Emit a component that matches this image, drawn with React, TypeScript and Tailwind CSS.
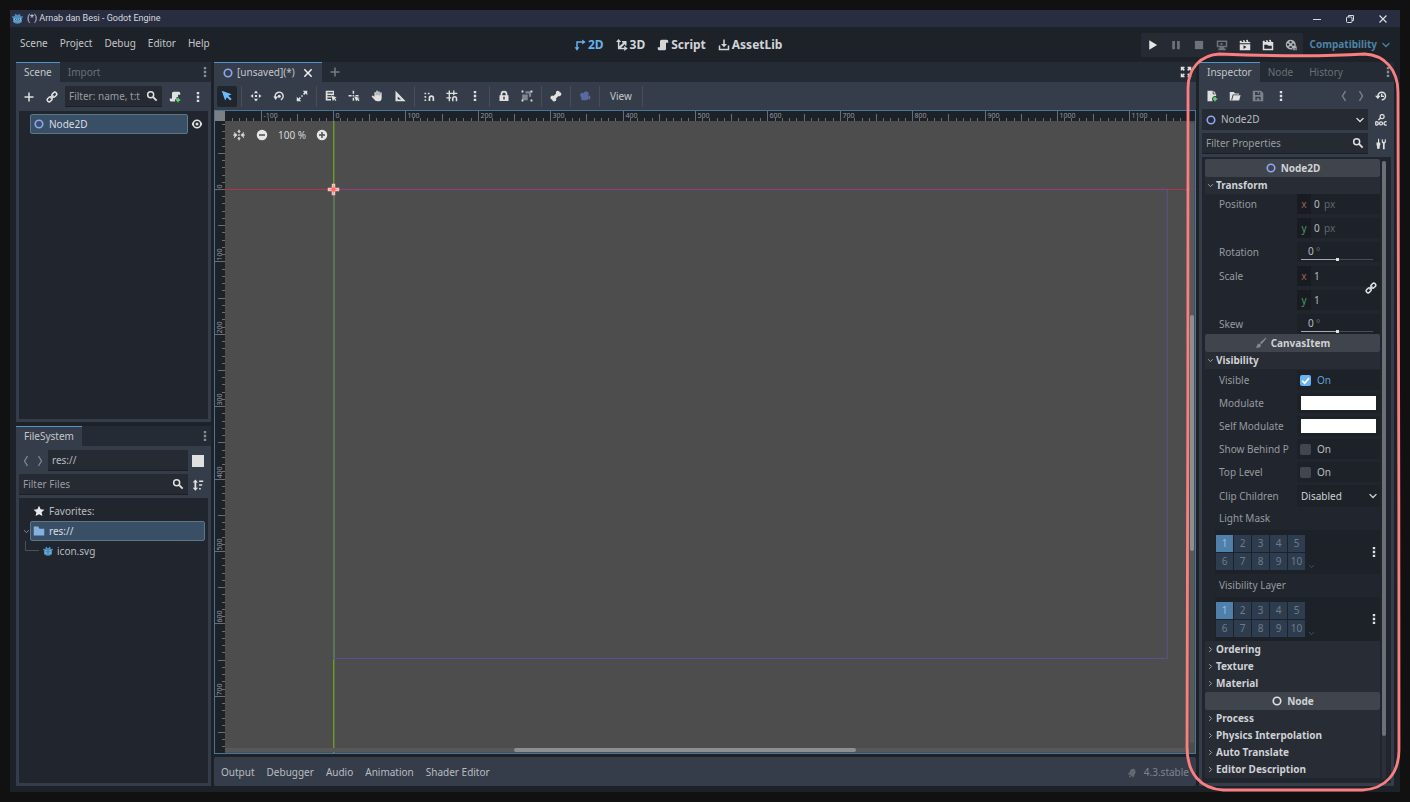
import React, { useState } from 'react';

const shapes: Record<string, React.ReactNode> = {
    add: <path d="M7 2v5H2v2h5v5h2V9h5V7H9V2z" />,
    close: <path d="M3.8 2.4 2.4 3.8 6.6 8l-4.2 4.2 1.4 1.4L8 9.4l4.2 4.2 1.4-1.4L9.4 8l4.2-4.2-1.4-1.4L8 6.6z" />,
    dots: <path d="M6.4 1.2h3.2v3.2H6.4zM6.4 6.4h3.2v3.2H6.4zM6.4 11.6h3.2v3.2H6.4z" />,
    link: (
        <g fill="none" stroke="currentColor" strokeWidth="2">
            <rect x="7.6" y="2.4" width="7" height="5" rx="2.5" transform="rotate(-45 11.1 4.9)" />
            <rect x="1.4" y="8.6" width="7" height="5" rx="2.5" transform="rotate(-45 4.9 11.1)" />
            <path d="M6 10l4-4" />
        </g>
    ),
    search: (
        <g fill="none" stroke="currentColor" strokeWidth="2">
            <circle cx="6.2" cy="6.2" r="4" />
            <path d="M9.2 9.2l5 5" strokeWidth="2.4" />
        </g>
    ),
    scriptAdd: (
        <>
            <path d="M6 1a2 2 0 0 0-2 2v7H1v2a2 2 0 0 0 2 2h5v-3h2V8h2V5h3V3a2 2 0 0 0-2-2z" />
            <path d="M11 9v2H9v2h2v2h2v-2h2v-2h-2V9z" fill="#5fdf6e" />
        </>
    ),
    script: <path d="M6 1a2 2 0 0 0-2 2v8H1v2a2 2 0 0 0 2 2h7a2 2 0 0 0 2-2V5h3V3a2 2 0 0 0-2-2z" />,
    node: <circle cx="8" cy="8" r="5" fill="none" stroke="currentColor" strokeWidth="2.2" />,
    eye: (
        <>
            <path d="M8 2C4.8 2 2.2 4.6 1 8c1.2 3.4 3.8 6 7 6s5.8-2.6 7-6c-1.2-3.4-3.8-6-7-6zm0 2a4 4 0 0 1 0 8 4 4 0 0 1 0-8z" fillRule="evenodd" />
            <circle cx="8" cy="8" r="2" />
        </>
    ),
    select: <path d="M1 1l4.5 13 2.4-4.3 4.3 4.3 2-2L9.8 7.8 14.2 5.6z" />,
    move: <path d="M8 .8 5.2 4.2h5.6zM8 15.2l-2.8-3.4h5.6zM.8 8l3.4-2.8v5.6zM15.2 8l-3.4-2.8v5.6zM6.6 6.6h2.8v2.8H6.6z" />,
    rotate: (
        <>
            <path d="M3.2 10A5.3 5.3 0 1 1 10.5 13" fill="none" stroke="currentColor" strokeWidth="2" />
            <path d="M.4 8.6h6.4L3.6 13.4z" />
            <circle cx="8.3" cy="8.2" r="2" />
        </>
    ),
    scale: <path d="M9 1h6v6l-2.2-2.2-1.9 1.900-1.600-1.600 1.900-1.900zM1 9v6h6l-2.200-2.200 1.900-1.900-1.600-1.600-1.900 1.900zM7 7h2v2H7z" />,
    list: <path d="M1 1h11v2H3.2v1.8H11v1.8H3.2v1.6H8V10H3.2v2H8v2H1zM8 7l2.6 8 1.5-2.6L14 14.6l1.2-1.2-2-2L15.6 10zM10.5 1H12v6h-1.5z" />,
    pivot: <path d="M6.2 1h2v4h-2zM.8 6.6h4v2h-4zM10 6.6h4v2h-4zM6.2 10.2h2v4h-2zM6.2 6.6h2v2h-2zM8.5 8.5l2.4 6.8 1.3-2.3 2 2 1.2-1.2-2-2 2.2-1.2z" />,
    hand: <path d="M7 1.5a1 1 0 0 1 2 0V7h.6V2.5a1 1 0 0 1 2 0V7h.6V4a1 1 0 0 1 2 0v6.5A4.5 4.5 0 0 1 9.7 15H8.5C6.5 15 5.4 14 4.5 12.8L1.3 9.2c-.8-1 .6-2.4 1.7-1.5L4.6 9V3.2a1 1 0 0 1 1.9 0V7H7z" />,
    ruler: <path d="M2 1v14h13.5zM5 8.5 9.5 12.5H5z" fillRule="evenodd" />,
    snap: <path d="M2 3.5h2.2v2.2H2zM2 8h2.2v2.2H2zM2 12.5h2.2v2H2zM6.5 3.5h2.2v2.2H6.5zM7.5 14.5v-3.7a3.7 3.7 0 0 1 7.4 0v3.7h-2.2v-3.7a1.5 1.5 0 0 0-3 0v3.7z" />,
    grid: <path d="M3.5.5h1.8v3h4.2v-3h1.8v3H15v1.8h-3.7V7H9.5V5.3H5.3v4.2H7v1.8H5.3V15H3.5v-3.7H.5V9.5h3V5.3h-3V3.5h3zM8 15v-3.5a3.5 3.5 0 0 1 7 0V15h-2v-3.5a1.5 1.5 0 0 0-3 0V15z" />,
    lock: <path d="M8 1a4.5 4.5 0 0 0-4.5 4.5V7H2v7.5h12V7h-1.5V5.5A4.5 4.5 0 0 0 8 1zm0 2.2a2.3 2.3 0 0 1 2.3 2.3V7H5.7V5.5A2.3 2.3 0 0 1 8 3.2zM7 9h2v3.5H7z" fillRule="evenodd" />,
    group: (
        <>
            <path d="M.8.8h2.4v2.4H.8zM12.8.8h2.4v2.4h-2.4zM.8 12.8h2.4v2.4H.8zM12.8 12.8h2.4v2.4h-2.4z" />
            <path d="M6 1.5h7.5V9h-3V4.5H6zM1.5 6H9v7.5H1.5z" opacity=".45" />
        </>
    ),
    bone: <path d="M10.5 1a2.6 2.6 0 0 0-2.4 3.6L4.6 8.1A2.6 2.6 0 1 0 3 12.9a2.6 2.6 0 1 0 4.9-1.5l3.5-3.5A2.6 2.6 0 1 0 13.1 3 2.6 2.6 0 0 0 10.5 1z" />,
    camera: <path d="M9 2a3.2 3.2 0 0 0-3.1 2.2A3 3 0 1 0 3 9.5V12a1.5 1.5 0 0 0 1.5 1.5h6A1.5 1.5 0 0 0 12 12v-.8l3 1.8V7l-2.6 1.5V7A3.2 3.2 0 0 0 9 2z" />,
    expand: <path d="M1 1h5v2H4.5l2 2L5 6.500l-2-2V6H1zM10 1h5v5h-2V4.500l-2 2L9.500 5l2-2H10zM1 10h2v1.500l2-2L6.500 11l-2 2H6v2H1zM11 9.500l2 2V10h2v5h-5v-2h1.500l-2-2z" />,
    center: (
        <>
            <path d="M7 1h2v2h1.500L8 5.800 5.500 3H7zM7 15h2v-2h1.500L8 10.200 5.500 13H7zM7 7h2v2H7z" />
            <path d="M1 3.500l1 3.500H.5v2H2l-1 3.500L6 8zM15 3.500 14 7h1.500v2H14l1 3.500L10 8z" />
        </>
    ),
    minus: <path d="M8 1a7 7 0 1 0 0 14A7 7 0 0 0 8 1zM4 7h8v2H4z" fillRule="evenodd" />,
    plus: <path d="M8 1a7 7 0 1 0 0 14A7 7 0 0 0 8 1zM7 4h2v3h3v2H9v3H7V9H4V7h3z" fillRule="evenodd" />,
    axes2d: <path d="M3 3h8V.8L15.5 4 11 7.2V5H5v6h2.2L4 15.5.8 11H3z" />,
    axes3d: <path d="M3.5 0 7 4H4.5v5.5L10 4.5H8V2.5h6v6h-2V6.5L6.5 11.5H11V9l4.500 3.500L11 16v-2.500H2.500V4H0z" />,
    assetLib: <path d="M7 .8h2v6h3L8 11 4 6.8h3zM1 8.5h2V13h10V8.5h2V15H1z" />,
    play: <path d="M3 1.8v12.4L13.5 8z" />,
    pause: <path d="M3 2.5h3.6v11H3zM9.4 2.5H13v11H9.4z" />,
    stop: <path d="M2.5 2.5h11v11h-11z" />,
    remote: <path d="M1 2h14v9h-4v1.5h2V15H3v-2.5h2V11H1zM3 4v5h10V4zM6 4.5v4L10 6.5z" fillRule="evenodd" />,
    clapPlay: <path d="M1 2.5 3 2l1 2h2L5 1.8l2.3-.3 1 2.5h2l-1-2.7 2.3-.3 1 3H15V15H1zM1 5.5V7h14V5.5zM6 8.3v5l4-2.5z" fillRule="evenodd" />,
    clap: <path d="M1 2.5 3 2l1 2h2L5 1.8l2.3-.3 1 2.5h2l-1-2.7 2.3-.3 1 3H15V15H1zM3 7.5V13h10V9H8.5L7 7.5z" fillRule="evenodd" />,
    movie: <path d="M7.5 1a6.5 6.5 0 1 0 0 13H10v-2h1v3h2v-3h1v3h1.5V9.5H14A6.5 6.5 0 0 0 7.5 1zm0 1.5a1.6 1.6 0 1 1 0 3.2 1.6 1.6 0 0 1 0-3.2zM4 6a1.5 1.5 0 1 1 0 3 1.5 1.5 0 0 1 0-3zm7 0a1.5 1.5 0 1 1 0 3 1.5 1.5 0 0 1 0-3zM6 9.5h3V12H6z" fillRule="evenodd" />,
    resNew: (
        <>
            <path d="M2 1h7v4.5h4.5V8H10v2H8v4h1v1H2zM10 1l3.5 3.5H10z" />
            <path d="M11 9v2H9v2h2v2h2v-2h2v-2h-2V9z" fill="#5fdf6e" />
        </>
    ),
    folderOpen: <path d="M1 2.5h5.5L8 4.5h5.5V6H5L3 13l1.5 1H1zM6 7h9.5L13.5 14H4z" />,
    save: <path d="M1 1h11l3 3v11H1zM4 2.5v4h7v-4H9.3V5H7.5V2.5zM4.5 9v4.5h7V9zM6.5 11h3v2.5h-3z" fillRule="evenodd" />,
    prev: <path d="M10 1.5 6 8l4 6.5" fill="none" stroke="currentColor" strokeWidth="1.8" />,
    next: <path d="M6 1.5 10 8l-4 6.5" fill="none" stroke="currentColor" strokeWidth="1.8" />,
    history: (
        <>
            <path d="M4 10V8a5 5 0 1 1 5 5" fill="none" stroke="currentColor" strokeWidth="2" />
            <path d="M0 7.5h7.5L3.8 12zM8 5h1.8v2.5H12v1.8H8z" />
        </>
    ),
    doc: (
        <g fill="none" stroke="currentColor">
            <circle cx="9.5" cy="3.5" r="2.7" strokeWidth="1.7" />
            <path d="M7.5 5.5 4.5 8" strokeWidth="2" />
            <path d="M1 10v5M1 10.3h1.2a2 2 0 0 1 0 4.4H1M15.5 10.7a2.2 2.2 0 1 0 0 3.6" strokeWidth="1.7" />
            <circle cx="8" cy="12.5" r="2" strokeWidth="1.7" />
        </g>
    ),
    tools: <path d="M4 1h1.5v5H7v4H6.3v3a1.8 1.8 0 0 1-3.6 0v-3H2V6h2zM9 1.5v3.3a3 3 0 0 0 1.6 2.6V15h2.3V7.4A3 3 0 0 0 14.500 4.8V1.5L13 2v3h-2.500V2z" />,
    down: <path d="M2.5 5l5.5 5.5L13.5 5" fill="none" stroke="currentColor" strokeWidth="2.2" />,
    right: <path d="M5 2.5l5.5 5.5L5 13.5" fill="none" stroke="currentColor" strokeWidth="2.2" />,
    brush: <path d="M14.5.8 6.5 7.5l2.2 2.2L15.3 1.7zM5.5 8.6c-1.5 0-2.3 1-2.5 2.4-.1 1-.8 2-2 2.5 3 1.5 7 .5 7-2.8z" />,
    star: <path d="M8 1l2.2 4.6 5 .6-3.7 3.4 1 5L8 12.2 3.5 14.6l1-5L.8 6.2l5-.6z" />,
    folder: <path d="M1 2h6l1.5 3H15v9H1z" />,
    sort: <path d="M4.5.5 8 4.5H5.7v7H8l-3.5 4-3.5-4h2.3v-7H1zM9.5 2H15v2H9.5zM9.5 7h4v2h-4zM9.5 12h2.2v2H9.5z" />,
    bell: <path d="M11 1.5C7 .5 5.5 3 4.5 5.5S2.5 8.5 1 9l10 6c.3-1.8 0-3 1.5-5S15 3.5 11 1.5zM3.5 12a2 2 0 0 0 3.5 2z" />,
};

const Icon: React.FC<{ name: string; size?: string; className?: string }> = ({ name, size = 'size-3', className = '' }) => (
    <svg viewBox="0 0 16 16" fill="currentColor" aria-hidden="true" className={`shrink-0 ${size} ${className}`}>
        {shapes[name]}
    </svg>
);

const GodotHead: React.FC<{ className?: string }> = ({ className = '' }) => (
    <svg viewBox="0 0 16 16" aria-hidden="true" className={`shrink-0 ${className}`}>
        <path d="M6 1 7 3h2l1-2 2 1v2l1.5 1L15 4l1 2-1.5 1.5V12c0 2-3 3.5-6.500 3.500S1.500 14 1.500 12V7.500L0 6l1-2 1.500 1L4 4V2z" fill="#478cbf" />
        <circle cx="4.8" cy="9" r="1.7" fill="#b9d3e6" />
        <circle cx="11.2" cy="9" r="1.7" fill="#b9d3e6" />
        <circle cx="5" cy="9" r="1" fill="#414042" />
        <circle cx="11" cy="9" r="1" fill="#414042" />
        <path d="M2.5 12h3v1h5v-1h3" fill="none" stroke="#8fbbdb" strokeWidth=".7" />
    </svg>
);

const IconButton: React.FC<{ icon: string; label: string; className?: string }> = ({ icon, label, className = 'w-5' }) => (
    <button type="button" aria-label={label} className={`flex h-[21px] shrink-0 items-center justify-center ${className}`}>
        <Icon name={icon} />
    </button>
);

const Separator = () => <span className="mx-px h-[21px] w-px shrink-0 bg-[#474e5a]" />;

const DockTabs: React.FC<{ tabs: string[] }> = ({ tabs }) => {
    const [active, setActive] = useState(tabs[0]);
    return (
        <div role="tablist" className="flex h-5 shrink-0 items-center bg-[#252b34]">
            {tabs.map((tab) => (
                <button
                    key={tab}
                    type="button"
                    role="tab"
                    aria-selected={tab === active}
                    onClick={() => setActive(tab)}
                    className={`h-full border-t px-2 ${tab === active ? 'border-[#5294cc] bg-[#363d4a] text-[#c3c6ca]' : 'border-transparent text-[#6b7077]'}`}
                >
                    {tab}
                </button>
            ))}
            <IconButton icon="dots" label="Dock options" className="ml-auto w-3 text-[#8a8e94]" />
        </div>
    );
};

const SearchBox: React.FC<{ placeholder: string }> = ({ placeholder }) => (
    <label className="flex h-[21px] min-w-0 flex-1 items-center gap-1 border-b border-[#1b2027] bg-[#252a33] pr-1 pl-1">
        <input type="text" aria-label={placeholder} placeholder={placeholder} className="w-full min-w-0 flex-1 bg-transparent outline-none placeholder:text-[#999ca1]" />
        <Icon name="search" className="text-[#e0e0e0]" />
    </label>
);

const SceneDock = () => (
    <section className="flex min-h-0 flex-1 flex-col">
        <DockTabs tabs={['Scene', 'Import']} />
        <div className="flex min-h-0 flex-1 flex-col gap-1 bg-[#363d4a] px-[3px] pt-1 pb-[3px]">
            <div className="flex items-center gap-[3px] text-[#e0e0e0]">
                <IconButton icon="add" label="Add node" />
                <IconButton icon="link" label="Instantiate scene" />
                <SearchBox placeholder="Filter: name, t:t" />
                <IconButton icon="scriptAdd" label="Attach script" />
                <IconButton icon="dots" label="More" />
            </div>
            <div className="flex-1 bg-[#21262e] pt-[3px] pr-[5px] pl-[11px]">
                <div className="flex h-5 items-center gap-[3px]">
                    <button type="button" className="flex h-5 flex-1 items-center gap-1 rounded-xs border border-[#5d7688] bg-[#384f66] px-0.5 text-[#dadde0]">
                        <Icon name="node" className="text-[#8da5f3]" />
                        Node2D
                    </button>
                    <IconButton icon="eye" label="Toggle visibility" className="w-3 text-[#e0e0e0]" />
                </div>
            </div>
        </div>
    </section>
);

const FileSystemDock = () => (
    <section className="flex min-h-0 flex-1 flex-col">
        <DockTabs tabs={['FileSystem']} />
        <div className="flex min-h-0 flex-1 flex-col gap-[3px] bg-[#363d4a] px-[3px] pt-1 pb-[3px]">
            <div className="flex items-center">
                <IconButton icon="prev" label="Back" className="w-3.5 text-[#7e838b]" />
                <IconButton icon="next" label="Forward" className="w-3.5 text-[#7e838b]" />
                <input aria-label="Path" defaultValue="res://" className="ml-px h-[21px] min-w-0 flex-1 border-b border-[#1b2027] bg-[#252a33] px-1 outline-none" />
                <button type="button" aria-label="Split mode" className="mr-1 ml-1 size-3 bg-[#e0e0e0]" />
            </div>
            <div className="flex items-center">
                <SearchBox placeholder="Filter Files" />
                <IconButton icon="sort" label="Sort files" className="w-5 text-[#e0e0e0]" />
            </div>
            <ul role="tree" className="flex-1 bg-[#21262e] pt-[3px] pr-[3px]">
                <li role="treeitem" className="flex h-5 items-center gap-1 pl-3.5">
                    <Icon name="star" className="text-[#e8e8e8]" />
                    Favorites:
                </li>
                <li role="treeitem" className="flex h-5 items-center pl-1">
                    <Icon name="down" size="size-[7px]" className="text-[#8a8e94]" />
                    <button type="button" className="flex h-5 flex-1 items-center gap-1 rounded-xs border border-[#5d7688] bg-[#384f66] px-0.5 text-[#dadde0]">
                        <Icon name="folder" className="text-[#84b1e0]" />
                        res://
                    </button>
                </li>
                <li role="treeitem" className="flex h-5 items-center pl-1.5">
                    <span className="h-2.5 w-3.5 self-start border-b border-l border-[#4b5058]" />
                    <GodotHead className="mr-1 ml-1 size-2.5" />
                    icon.svg
                </li>
            </ul>
        </div>
    </section>
);

// Canvas geometry: origin inside the canvas and on-screen length of 10 units
const ORIGIN_X = 108.5;
const ORIGIN_Y = 68.5;
const STEP = 7.24;

const ticks = (from: number, to: number) => Array.from({ length: to - from }, (_, i) => from + i);
const tickSize = (n: number) => (n % 10 === 0 ? 10 : n % 5 === 0 ? 7 : 3);

const TopRuler = () => (
    <svg className="h-2.5 w-full bg-[#1d2229]" aria-hidden="true">
        {ticks(-14, 119).map((n) => {
            const x = Math.round(ORIGIN_X + n * STEP - 0.5) + 0.5;
            return (
                <g key={n}>
                    <path d={`M${x} 10v-${tickSize(n)}`} stroke="#6a6e74" />
                    {n % 10 === 0 && <text x={x + 2} y="7" fontSize="7" fill="#94979b">{n * 10}</text>}
                </g>
            );
        })}
    </svg>
);

const SideRuler = () => (
    <svg className="h-full w-2.5 bg-[#1d2229]" aria-hidden="true">
        {ticks(-9, 78).map((n) => {
            const y = Math.round(ORIGIN_Y + n * STEP - 0.5) + 0.5;
            return (
                <g key={n}>
                    <path d={`M10 ${y}h-${tickSize(n)}`} stroke="#6a6e74" />
                    {n % 10 === 0 && <text transform={`translate(7 ${y - 1}) rotate(-90)`} fontSize="7" fill="#94979b">{n * 10}</text>}
                </g>
            );
        })}
    </svg>
);

const Canvas = () => (
    <div className="relative min-h-0 overflow-hidden bg-[#4d4d4d]">
        <svg className="absolute inset-0 size-full" aria-hidden="true">
            <rect x="0" y="67" width="100%" height="1" fill="#5a494b" />
            <rect x="0" y="68" width="100%" height="1" fill="#a5394a" />
            <rect x="108" y="0" width="1" height="100%" fill="#6c9a2c" />
            <rect x="109" y="0" width="1" height="100%" fill="#587038" />
            <rect x="108" y="69" width="2" height="468" fill="#5c7558" />
            <rect x="108" y="537" width="835" height="1" fill="#565292" />
            <rect x="941" y="68" width="1" height="470" fill="#504e5a" />
            <rect x="942" y="68" width="1" height="470" fill="#565288" />
            <rect x="108" y="67" width="835" height="1" fill="#574a55" />
            <rect x="108" y="68" width="835" height="1" fill="#8a4079" />
            <path d="M107.5 63.5h2v4h4v2h-4v4h-2v-4h-4v-2h4z" fill="#ff7466" stroke="#f0c4bd" strokeWidth="1.5" />
            <circle cx="108.5" cy="68.5" r="2.2" fill="#ff6a5c" />
        </svg>
        <div className="relative flex h-7 items-center pl-1 text-[#d8d8d8]">
            <IconButton icon="center" label="Center view" />
            <IconButton icon="minus" label="Zoom out" className="ml-[3px] w-5 text-[#e6e6e6]" />
            <button type="button" className="w-10">100 %</button>
            <IconButton icon="plus" label="Zoom in" className="w-5 text-[#e6e6e6]" />
        </div>
        <div className="absolute right-1.5 bottom-px left-0 h-1 bg-[#585858]">
            <div className="ml-[30%] h-full w-[35.5%] rounded-full bg-[#8e8e8e]" />
        </div>
        <div className="absolute top-0.5 right-px bottom-2.5 w-1 bg-[#585858]">
            <div className="absolute top-[31%] h-[38%] w-full rounded-full bg-[#8e8e8e]" />
        </div>
    </div>
);

const Toolbar = () => (
    <div className="flex h-7 shrink-0 items-center gap-[3px] bg-[#363d4a] pl-[3px] text-[#e0e0e0]">
        <IconButton icon="select" label="Select mode" className="w-5 rounded-xs bg-[#20262e] text-[#70bafa]" />
        <Separator />
        <IconButton icon="move" label="Move mode" />
        <IconButton icon="rotate" label="Rotate mode" />
        <IconButton icon="scale" label="Scale mode" />
        <Separator />
        <IconButton icon="list" label="List selectable nodes" />
        <IconButton icon="pivot" label="Change pivot" />
        <IconButton icon="hand" label="Pan mode" />
        <IconButton icon="ruler" label="Ruler mode" />
        <Separator />
        <IconButton icon="snap" label="Smart snap" />
        <IconButton icon="grid" label="Grid snap" />
        <IconButton icon="dots" label="Snapping options" />
        <Separator />
        <IconButton icon="lock" label="Lock" />
        <IconButton icon="group" label="Group" />
        <Separator />
        <IconButton icon="bone" label="Skeleton options" />
        <Separator />
        <IconButton icon="camera" label="Override camera" className="w-5 text-[#596a9c]" />
        <Separator />
        <button type="button" className="px-1.5 text-[#c3c6ca]">View</button>
        <Separator />
    </div>
);

const Workspace = () => (
    <main className="flex min-w-0 flex-1 flex-col">
        <div className="flex h-5 shrink-0 items-center bg-[#252b34]">
            <div className="flex h-5 items-center gap-[3px] border-t border-[#5294cc] bg-[#363d4a] pr-2 pl-2 text-[#c3c6ca]">
                <Icon name="node" className="text-[#8da5f3]" />
                [unsaved](*)
                <button type="button" aria-label="Close scene" className="ml-1 text-[#f0f0f0]"><Icon name="close" /></button>
            </div>
            <IconButton icon="add" label="New scene" className="ml-[3px] w-5 text-[#777b81]" />
            <IconButton icon="expand" label="Distraction free mode" className="ml-auto w-5 text-[#e0e0e0]" />
        </div>
        <Toolbar />
        <div className="grid min-h-0 flex-1 grid-cols-[10px_1fr] grid-rows-[10px_1fr] border border-[#487598]">
            <div className="bg-[#7c8086]" />
            <TopRuler />
            <SideRuler />
            <Canvas />
        </div>
        <nav aria-label="Bottom panel" className="mt-[3px] flex h-[29px] shrink-0 items-center gap-3 rounded-xs bg-[#363d4a] px-[7px] pt-0.5">
            {['Output', 'Debugger', 'Audio', 'Animation', 'Shader Editor'].map((name) => (
                <button key={name} type="button">{name}</button>
            ))}
            <span className="ml-auto flex items-center gap-[7px] text-[#7f848c]">
                <Icon name="bell" size="size-2.5" className="text-[#626770]" />
                4.3.stable
            </span>
        </nav>
    </main>
);

const ClassHeader: React.FC<{ icon: string; iconClass: string; title: string }> = ({ icon, iconClass, title }) => (
    <h2 className="flex h-[18px] items-center justify-center gap-1 rounded-xs bg-[#40444c] font-bold text-[#cfd1d4]">
        <Icon name={icon} className={iconClass} />
        {title}
    </h2>
);

const Section: React.FC<{ title: string; open?: boolean }> = ({ title, open = false }) => (
    <button type="button" aria-expanded={open} className="flex h-[17px] w-full items-center gap-0.5 bg-[#282c35] pl-0.5 font-bold text-[#cfd1d4]">
        <Icon name={open ? 'down' : 'right'} size="size-[7px]" className="text-[#a0a3a8]" />
        {title}
    </button>
);

const Row: React.FC<{ label: string; htmlFor?: string; children: React.ReactNode; className?: string }> = ({ label, htmlFor, children, className = 'h-5' }) => (
    <div className={`flex ${className}`}>
        <label htmlFor={htmlFor} className="flex w-[92px] shrink-0 items-center pl-3.5 whitespace-nowrap text-[#979a9f]">{label}</label>
        <div className="flex min-w-0 flex-1 items-center bg-[#1d2229]">{children}</div>
    </div>
);

const AxisField: React.FC<{ id: string; axis: 'x' | 'y'; value: string; unit?: string }> = ({ id, axis, value, unit }) => (
    <>
        <span className={`flex h-full w-3.5 items-center justify-center bg-[#181b21] ${axis === 'x' ? 'text-[#a0614f]' : 'text-[#4f9a61]'}`}>{axis}</span>
        <input id={id} defaultValue={value} className="ml-[3px] w-2.5 bg-transparent outline-none" />
        {unit && <span className="text-[#62666d]">{unit}</span>}
    </>
);

const AngleField: React.FC<{ id: string; label: string }> = ({ id, label }) => (
    <div className="flex h-full flex-1 flex-col pr-[7px] pl-1">
        <div className="flex flex-1 items-center pt-0.5 pl-[7px]">
            <input id={id} defaultValue="0" className="w-2 bg-transparent outline-none" />
            <span className="text-[#62666d]">°</span>
        </div>
        <input
            type="range"
            aria-label={label}
            className="mb-0.5 h-px w-full appearance-none bg-linear-to-r from-[#a8aaad] from-50% to-[#484c53] to-50% [&::-webkit-slider-thumb]:size-[3px] [&::-webkit-slider-thumb]:appearance-none [&::-webkit-slider-thumb]:bg-[#e0e0e0]"
        />
    </div>
);

const CheckField: React.FC<{ id: string; checked?: boolean }> = ({ id, checked = false }) => {
    const [on, setOn] = useState(checked);
    return (
        <label className={`flex items-center gap-1.5 pl-[3px] ${on ? 'text-[#5f9fd6]' : ''}`}>
            <span className="relative size-[11px]">
                <input id={id} type="checkbox" checked={on} onChange={() => setOn(!on)} className="block size-[11px] appearance-none rounded-xs bg-[#42464e] checked:bg-[#69b3f5]" />
                {on && (
                    <svg viewBox="0 0 10 10" className="pointer-events-none absolute inset-0 size-[11px]" aria-hidden="true">
                        <path d="M2 5.2l2.2 2.3L8.2 2.8" fill="none" stroke="#fff" strokeWidth="1.6" />
                    </svg>
                )}
            </span>
            On
        </label>
    );
};

const ColorField: React.FC<{ label: string }> = ({ label }) => (
    <button type="button" aria-label={label} className="mx-1 h-3.5 flex-1 bg-white" />
);

const LayerField: React.FC<{ label: string }> = ({ label }) => (
    <div className="pl-2.5">
        <div className="h-4 pl-1 leading-4 text-[#979a9f]">{label}</div>
        <div className="mt-1 flex h-11 items-center bg-[#1d2229] pl-px">
            <div className="grid grid-cols-5 gap-px">
                {Array.from({ length: 10 }, (_, i) => (
                    <button key={i} type="button" className={`h-[17px] w-[17px] leading-4 ${i === 0 ? 'bg-[#4f7fab] text-[#a3bdd4]' : 'bg-[#2d3d4f] text-[#6f7b87]'}`}>
                        {i + 1}
                    </button>
                ))}
            </div>
            <Icon name="down" size="size-[7px]" className="mb-1 ml-[3px] self-end text-[#3c5670]" />
            <IconButton icon="dots" label={`${label} options`} className="ml-auto w-3 text-[#e0e0e0]" />
        </div>
    </div>
);

const Inspector = () => (
    <aside className="flex w-[195px] shrink-0 flex-col">
        <DockTabs tabs={['Inspector', 'Node', 'History']} />
        <div className="flex min-h-0 flex-1 flex-col gap-[3px] bg-[#363d4a] p-[3px] text-[#e0e0e0]">
            <div className="flex items-center gap-[3px]">
                <IconButton icon="resNew" label="New resource" />
                <IconButton icon="folderOpen" label="Load resource" />
                <IconButton icon="save" label="Save resource" className="w-5 text-[#7e838b]" />
                <IconButton icon="dots" label="Resource options" />
                <IconButton icon="prev" label="Previous object" className="ml-auto w-3.5 text-[#7e838b]" />
                <IconButton icon="next" label="Next object" className="w-3.5 text-[#7e838b]" />
                <IconButton icon="history" label="Edited objects" />
            </div>
            <div className="flex items-center gap-[3px]">
                <label className="flex h-[21px] flex-1 items-center gap-1 bg-[#252a33] px-[3px]">
                    <Icon name="node" className="text-[#8da5f3]" />
                    <select aria-label="Edited object" className="min-w-0 flex-1 appearance-none bg-transparent text-[#b9bcc0] outline-none">
                        <option>Node2D</option>
                    </select>
                    <Icon name="down" size="size-2.5" />
                </label>
                <IconButton icon="doc" label="Open documentation" />
            </div>
            <div className="flex items-center gap-[3px]">
                <SearchBox placeholder="Filter Properties" />
                <IconButton icon="tools" label="Property tools" />
            </div>
            <div className="flex min-h-0 flex-1 gap-0.5 overflow-hidden bg-[#21262e] py-0.5 pr-[5px] pl-[3px] text-[#b9bcc0]">
                <div className="min-w-0 flex-1">
                    <ClassHeader icon="node" iconClass="text-[#8da5f3]" title="Node2D" />
                    <Section title="Transform" open />
                    <div className="flex flex-col gap-1">
                        <Row label="Position" htmlFor="pos-x"><AxisField id="pos-x" axis="x" value="0" unit="px" /></Row>
                        <Row label="" htmlFor="pos-y"><AxisField id="pos-y" axis="y" value="0" unit="px" /></Row>
                        <Row label="Rotation" htmlFor="rotation"><AngleField id="rotation" label="Rotation slider" /></Row>
                        <div className="relative flex flex-col gap-1">
                            <Row label="Scale" htmlFor="scale-x"><AxisField id="scale-x" axis="x" value="1" /></Row>
                            <Row label="" htmlFor="scale-y"><AxisField id="scale-y" axis="y" value="1" /></Row>
                            <button type="button" aria-label="Link scale" className="absolute top-4 right-[3px] text-[#e0e0e0]"><Icon name="link" /></button>
                        </div>
                        <Row label="Skew" htmlFor="skew"><AngleField id="skew" label="Skew slider" /></Row>
                    </div>
                    <ClassHeader icon="brush" iconClass="text-[#85888d]" title="CanvasItem" />
                    <Section title="Visibility" open />
                    <div className="flex flex-col gap-[3px] pt-px">
                        <Row label="Visible" htmlFor="visible"><CheckField id="visible" checked /></Row>
                        <Row label="Modulate"><ColorField label="Modulate" /></Row>
                        <Row label="Self Modulate"><ColorField label="Self Modulate" /></Row>
                        <Row label="Show Behind P" htmlFor="behind"><CheckField id="behind" /></Row>
                        <Row label="Top Level" htmlFor="top-level"><CheckField id="top-level" /></Row>
                        <Row label="Clip Children" htmlFor="clip" className="h-[22px]">
                            <select id="clip" className="ml-1 min-w-0 flex-1 appearance-none bg-transparent text-[#cfd1d4] outline-none">
                                <option>Disabled</option>
                            </select>
                            <Icon name="down" size="size-2.5" className="mr-0.5 text-[#d0d0d0]" />
                        </Row>
                        <LayerField label="Light Mask" />
                        <LayerField label="Visibility Layer" />
                    </div>
                    <Section title="Ordering" />
                    <Section title="Texture" />
                    <Section title="Material" />
                    <ClassHeader icon="node" iconClass="text-[#e0e0e0]" title="Node" />
                    <Section title="Process" />
                    <Section title="Physics Interpolation" />
                    <Section title="Auto Translate" />
                    <Section title="Editor Description" />
                </div>
                <div className="my-0.5 w-1 shrink-0 bg-[#2b3038]">
                    <div className="h-[93%] rounded-full bg-[#6c7076]" />
                </div>
            </div>
        </div>
    </aside>
);

const TitleBar = () => (
    <header className="flex h-[17px] shrink-0 items-center bg-[#282d40] pl-0.5 text-[#d8dade]">
        <GodotHead className="mr-1 size-[11px]" />
        <h1 className="font-['Roboto',sans-serif] text-[9px]">(*) Arnab dan Besi - Godot Engine</h1>
        <div className="ml-auto flex pr-px">
            <button type="button" aria-label="Minimize" className="flex w-[33px] justify-center">
                <svg viewBox="0 0 10 10" className="size-2.5" fill="none" stroke="currentColor"><path d="M1 5.5h8" /></svg>
            </button>
            <button type="button" aria-label="Restore" className="flex w-[33px] justify-center">
                <svg viewBox="0 0 10 10" className="size-2.5" fill="none" stroke="currentColor"><rect x="1.5" y="3" width="5.5" height="5.5" rx="1" /><path d="M3.5 3V1.5h5v5H7" /></svg>
            </button>
            <button type="button" aria-label="Close" className="flex w-[33px] justify-center">
                <svg viewBox="0 0 10 10" className="size-2.5" fill="none" stroke="currentColor" strokeWidth="1.2"><path d="M1.5 1.5l7 7M8.5 1.5l-7 7" /></svg>
            </button>
        </div>
    </header>
);

const modes = [
    { icon: 'axes2d', label: '2D' },
    { icon: 'axes3d', label: '3D' },
    { icon: 'script', label: 'Script' },
    { icon: 'assetLib', label: 'AssetLib' },
];

const MenuBar = () => (
    <div className="flex h-[35px] shrink-0 items-center justify-between pr-[9px] pl-2.5">
        <nav aria-label="Main menu" className="flex gap-3 pr-1.5 pb-0.5">
            {['Scene', 'Project', 'Debug', 'Editor', 'Help'].map((item) => (
                <button key={item} type="button" className="text-[#c3c6ca]">{item}</button>
            ))}
        </nav>
        <div className="flex gap-3 text-xs font-bold text-[#d2d4d7]">
            {modes.map(({ icon, label }) => (
                <button key={label} type="button" className={`flex items-center gap-0.5 ${label === '2D' ? 'text-[#66b0ee]' : ''}`}>
                    <Icon name={icon} />
                    {label}
                </button>
            ))}
        </div>
        <div className="flex items-center gap-[7px]">
            <div className="flex h-6 items-center gap-[3px] rounded-xs bg-[#252a33] px-0.5 text-[#6f7379]">
                <IconButton icon="play" label="Run project" className="w-5 text-[#e6e6e6]" />
                <IconButton icon="pause" label="Pause" />
                <IconButton icon="stop" label="Stop" />
                <IconButton icon="remote" label="Remote deploy" />
                <IconButton icon="clapPlay" label="Run current scene" className="w-5 text-[#e0e0e0]" />
                <IconButton icon="clap" label="Run specific scene" className="w-5 text-[#e0e0e0]" />
                <IconButton icon="movie" label="Movie maker mode" className="w-5 text-[#b0b2b5]" />
            </div>
            <button type="button" className="flex items-center gap-1 font-bold text-[#4d83a6]">
                Compatibility
                <Icon name="down" size="size-2.5" />
            </button>
        </div>
    </div>
);

// Hand-drawn marker around the inspector
const Marker = () => (
    <svg viewBox="0 0 214 740" preserveAspectRatio="none" fill="none" className="pointer-events-none absolute top-[52px] right-[9px] h-[calc(100%-62px)] w-[216px]" aria-hidden="true">
        <path d="M34 2C16 3 3 16 3 36C2 240 4 500 2 695C2 722 16 737 38 738H176C198 737 212 722 212 698C213 480 210 250 211 40C211 18 198 3 178 2C130 5 84 4 34 2z" stroke="#fb7f80" strokeWidth="2.8" />
    </svg>
);

export default function App() {
    return (
        <div className="relative flex h-screen min-h-[802px] flex-col bg-[#111111] p-2.5 font-['Noto_Sans',sans-serif] text-[10px] text-[#b9bcc0]">
            <TitleBar />
            <div className="flex min-h-0 flex-1 flex-col bg-[#1d2229]">
                <MenuBar />
                <div className="flex min-h-0 flex-1 gap-[3px] px-1.5 pb-1.5">
                    <div className="flex w-[195px] shrink-0 flex-col gap-1">
                        <SceneDock />
                        <FileSystemDock />
                    </div>
                    <Workspace />
                    <Inspector />
                </div>
            </div>
            <Marker />
        </div>
    );
}
